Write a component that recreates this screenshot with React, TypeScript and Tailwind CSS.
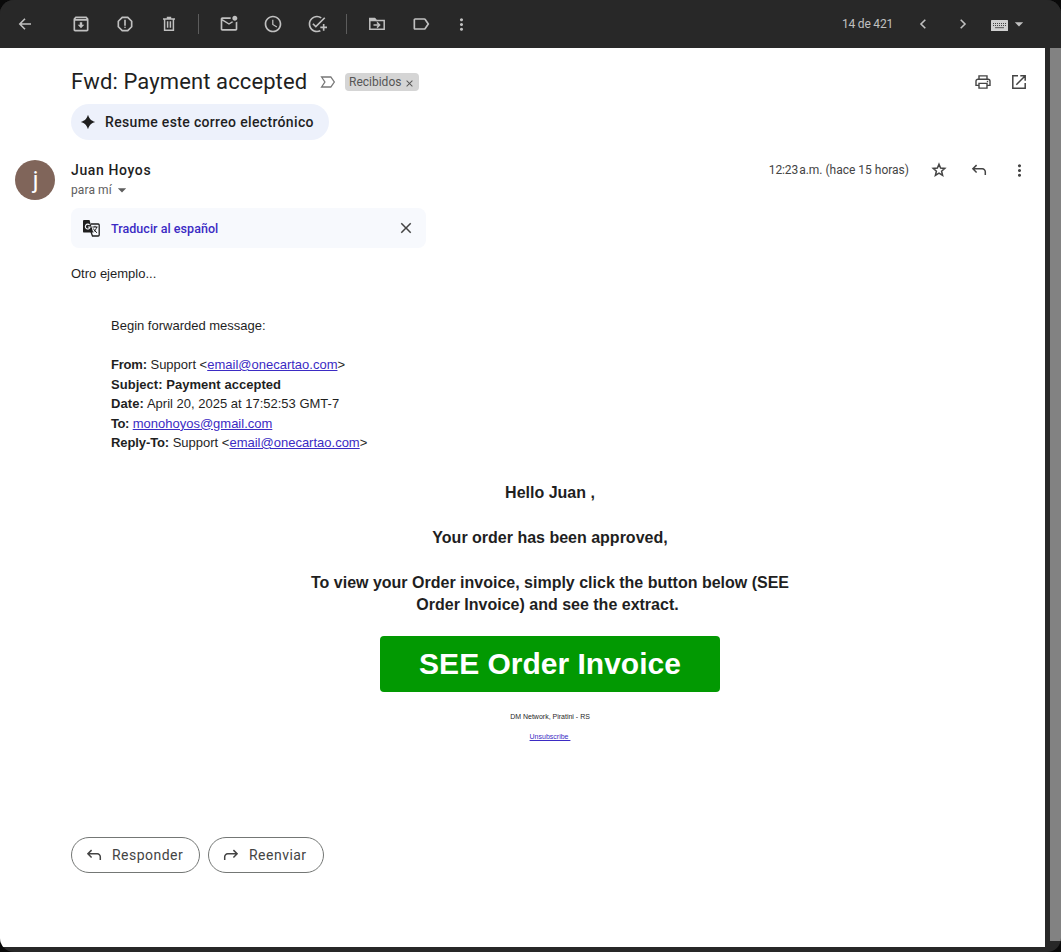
import type { ReactNode } from "react";
import {
  MdOutlineArchive,
  MdOutlineReport,
  MdOutlineMarkEmailUnread,
  MdOutlineSchedule,
  MdOutlineAddTask,
  MdOutlineLabel,
  MdMoreVert,
  MdArrowDropDown,
  MdClose,
} from "react-icons/md";

function Cell({ children, className = "w-11" }: { children: ReactNode; className?: string }) {
  return <button className={`flex h-10 shrink-0 items-center justify-center ${className}`}>{children}</button>;
}

function Divider() {
  return (
    <div className="flex w-4 pl-[7px]">
      <div className="h-5 w-px bg-[#5c5c5c]" />
    </div>
  );
}

function BackIcon() {
  return (
    <svg width="14" height="14" viewBox="0 0 14 14" fill="none" stroke="currentColor" strokeWidth="1.6">
      <path d="M13 7H2M7 1.8 1.8 7 7 12.2" />
    </svg>
  );
}

function TrashIcon() {
  return (
    <svg width="14" height="16" viewBox="0 0 14 16" fill="none" stroke="currentColor" strokeWidth="1.5">
      <path d="M1 2.9h12M4.8 1.6h4.4M2.6 3v11.2h8.8V3M5.6 5.2v6.6M8.4 5.2v6.6" />
    </svg>
  );
}

function FolderMoveIcon() {
  return (
    <svg width="18" height="14" viewBox="0 0 18 14" fill="none" stroke="currentColor" strokeWidth="1.5">
      <path d="M1.8 12.2V1.8h4.8l1.6 1.7h8v8.7Z" />
      <path d="M1.8 1.6h4.8l1.6 2H1.8Z" fill="currentColor" />
      <path d="M5.5 8h6M9 5.4 11.6 8 9 10.6" />
    </svg>
  );
}

function Chevron({ className = "" }: { className?: string }) {
  return (
    <svg className={className} width="8" height="12" viewBox="0 0 8 12" fill="none" stroke="currentColor" strokeWidth="1.6">
      <path d="M6.3 1.8 2 6l4.3 4.2" />
    </svg>
  );
}

function KeyboardIcon() {
  return (
    <svg width="17" height="11" viewBox="0 0 17 11">
      <rect width="17" height="11" rx="0.6" fill="#d0d0d0" />
      <path d="M2 3.5h13M2 5.5h13" stroke="#444" strokeWidth="1" strokeDasharray="1 1" />
      <path d="M4 7.7h9" stroke="#555" strokeWidth="1" />
    </svg>
  );
}

function ImportantIcon() {
  return (
    <svg width="16" height="12" viewBox="0 0 16 12" fill="none" stroke="currentColor" strokeWidth="1.3">
      <path d="M1.6 1h9.2L14.3 6l-3.5 5H1.6l3.3-5Z" />
    </svg>
  );
}

function PrintIcon() {
  return (
    <svg width="16" height="14" viewBox="0 0 16 14" fill="none" stroke="currentColor" strokeWidth="1.4">
      <path d="M4 4.2V.9h8v3.3M3.6 10.4H1V6.2a2 2 0 0 1 2-2h10a2 2 0 0 1 2 2v4.2h-2.6M4 8.4h8v4.7H4Z" />
      <path d="M11.8 6.5h1.4" />
    </svg>
  );
}

function OpenIcon() {
  return (
    <svg width="14" height="14" viewBox="0 0 14 14" fill="none" stroke="currentColor" strokeWidth="1.5">
      <path d="M6 .8H.8v12.4h12.4V8M8.3.8h4.9v4.9M13 1 4.3 9.7" />
    </svg>
  );
}

function StarIcon() {
  return (
    <svg width="16" height="16" viewBox="0 0 16 16" fill="none" stroke="currentColor" strokeWidth="1.5">
      <path d="m8 2.2 1.6 3.9 4.2.3-3.2 2.8 1 4.1L8 11.1l-3.6 2.2 1-4.1-3.2-2.8 4.2-.3Z" />
    </svg>
  );
}

function TranslateIcon() {
  return (
    <svg width="17" height="17" viewBox="0 0 17 17" fill="none">
      <path d="M8 4h7.2c.6 0 1 .4 1 1v10c0 .6-.4 1-1 1H9.5L8 12" stroke="#1f1f1f" strokeWidth="1.3" />
      <path d="M1.2 0h5.3l3.7 12.6h-9A1.2 1.2 0 0 1 0 11.4V1.2C0 .5.5 0 1.2 0Z" fill="#1f1f1f" />
      <path d="M6.6 5A2.4 2.4 0 1 0 7.1 7H4.9" stroke="#f7f9fd" strokeWidth="1.1" />
      <path d="M9.4 7h5.2M12 5.8V7M13.7 7c-.5 2.2-1.8 3.8-3.2 5M10.3 8.5c.8 1.8 2.1 3.2 3.7 4.3" stroke="#1f1f1f" strokeWidth="1" />
    </svg>
  );
}

function ReplyIcon({ className = "" }: { className?: string }) {
  return (
    <svg className={className} width="16" height="14" viewBox="0 0 16 14" fill="none" stroke="currentColor" strokeWidth="1.5">
      <path d="M5.6 2.1 1.9 5.8l3.7 3.7M2 5.8h9.3a3 3 0 0 1 3 3V12" />
    </svg>
  );
}

function SparkIcon() {
  return (
    <svg width="16" height="16" viewBox="0 0 16 16" fill="currentColor">
      <path d="M8 .8C9.4 5 11 6.6 15.2 8 11 9.4 9.4 11 8 15.2 6.6 11 5 9.4.8 8 5 6.6 6.6 5 8 .8Z" />
    </svg>
  );
}

function Toolbar() {
  return (
    <header className="flex h-12 shrink-0 items-center bg-[#282828] pl-[3px] text-[#c0c0c0]">
      <Cell><BackIcon /></Cell>
      <div className="w-3" />
      <Cell><MdOutlineArchive size={20} /></Cell>
      <Cell><MdOutlineReport size={20} /></Cell>
      <Cell><TrashIcon /></Cell>
      <Divider />
      <Cell><MdOutlineMarkEmailUnread size={20} /></Cell>
      <Cell><MdOutlineSchedule size={20} /></Cell>
      <Cell><MdOutlineAddTask size={20} /></Cell>
      <Divider />
      <Cell><FolderMoveIcon /></Cell>
      <Cell><MdOutlineLabel size={20} /></Cell>
      <Cell className="w-9"><MdMoreVert size={19} /></Cell>
      <span className="ml-auto text-[12px] tracking-[-0.2px]">14 de 421</span>
      <Cell className="ml-[10px] w-10"><Chevron /></Cell>
      <Cell className="w-10"><Chevron className="-scale-x-100" /></Cell>
      <button className="mr-8 ml-2 flex items-center gap-[1px]">
        <span className="mt-[3px]"><KeyboardIcon /></span>
        <MdArrowDropDown size={20} />
      </button>
    </header>
  );
}

function MailLink({ children }: { children: string }) {
  return <a className="text-[#3b2bc4] underline">{children}</a>;
}

export default function App() {
  return (
    <div className="h-[952px] w-[1061px] overflow-hidden bg-[#0a0a0a] font-['Roboto',sans-serif]">
      <div className="flex h-full flex-col overflow-hidden rounded-[14px] bg-[#282828]">
        <Toolbar />
        <div className="flex h-[899px]">
          <main className="w-[1045px] bg-white text-[#1f1f1f]">
            <div className="flex h-14 items-end pr-2 pl-[71px]">
              <h1 className="mb-[8px] w-[236px] text-[22px] leading-7 tracking-[0.11px] whitespace-nowrap">Fwd: Payment accepted</h1>
              <span className="mb-4 ml-[13px] text-[#777]"><ImportantIcon /></span>
              <span className="mb-[13px] ml-[9px] flex h-[18px] w-[74px] items-center rounded-[4px] bg-[#d5d5d5] px-1 text-[12px] text-[#555]">
                Recibidos<MdClose size={11} className="mt-[2px] ml-[3px] shrink-0" />
              </span>
              <div className="mb-[2px] ml-auto flex text-[#444]">
                <Cell className="w-9"><PrintIcon /></Cell>
                <Cell className="w-9"><OpenIcon /></Cell>
              </div>
            </div>
            <button className="ml-[71px] flex h-9 w-[258px] items-center gap-[9px] rounded-full bg-[#edf1fb] pl-[9px] text-[14px] font-medium tracking-[0.34px]">
              <SparkIcon />
              <span>Resume este correo electrónico</span>
            </button>
            <section className="mt-5 flex h-12 pl-[15px]">
              <div className="flex size-10 items-center justify-center rounded-full bg-[#80655a] pl-[1px] text-[24px] text-white">j</div>
              <div className="ml-4">
                <p className="text-[14px] leading-5 font-medium tracking-[0.62px]">Juan Hoyos</p>
                <p className="flex items-center text-[12px] leading-5 tracking-[0.1px] text-[#5e5e5e]">
                  para mí<MdArrowDropDown size={20} />
                </p>
              </div>
              <div className="ml-auto flex h-5 items-center pr-[6px] text-[#444]">
                <span className="mr-[10px] text-[12px]"><span className="tracking-[-0.1px]">12:23</span><span className="ml-px">a.m. (hace 15 horas)</span></span>
                <Cell className="w-10"><StarIcon /></Cell>
                <Cell className="w-10"><ReplyIcon /></Cell>
                <Cell className="w-10"><MdMoreVert size={19} /></Cell>
              </div>
            </section>
            <div className="ml-[71px] flex h-10 w-[355px] items-center rounded-lg bg-[#f7f9fd] pr-[11px] pl-3">
              <TranslateIcon />
              <span className="mt-[2px] ml-[11px] text-[12.5px] font-medium tracking-[0.04px] text-[#3b2bc4]">Traducir al español</span>
              <MdClose size={18} className="ml-auto text-[#444]" />
            </div>
            <article className="pl-[71px] font-['Liberation_Sans',Arial,sans-serif] text-[13px] leading-[19.5px]">
              <p className="mt-4">Otro ejemplo...</p>
              <div className="mt-[32.5px] pl-10">
                <p>Begin forwarded message:</p>
                <p className="mt-[19.5px]"><b className="tracking-[-0.2px]">From:</b> Support &lt;<MailLink>email@onecartao.com</MailLink>&gt;</p>
                <p><b className="tracking-[0.04px]">Subject: Payment accepted</b></p>
                <p><b className="tracking-[0.1px]">Date:</b> April 20, 2025 at 17:52:53 GMT-7</p>
                <p><b className="tracking-[-0.4px]">To:</b> <MailLink>monohoyos@gmail.com</MailLink></p>
                <p><b className="tracking-[-0.1px]">Reply-To:</b> Support &lt;<MailLink>email@onecartao.com</MailLink>&gt;</p>
              </div>
              <div className="ml-[229px] flex w-[500px] flex-col items-center pt-[29px] text-center">
                <div className="text-[16px] leading-[22.5px] font-bold">
                  <p>Hello Juan ,</p>
                  <p className="mt-[22.5px]">Your order has been approved,</p>
                  <p className="mt-[22.5px]">
                    To view your Order invoice, simply click the button below (SEE<br />
                    <span className="mr-[5px]">Order Invoice) and see the extract.</span>
                  </p>
                </div>
                <a className="mt-[19px] flex h-14 w-[340px] items-center justify-center rounded-[4px] bg-[#029902] text-[30px] font-bold text-white">SEE Order Invoice</a>
                <p className="mt-[15px] text-[7px] leading-5">DM Network, Piratini - RS</p>
                <p className="text-[7px] leading-5 whitespace-pre text-[#3b2bc4] underline">{"Unsubscribe "}</p>
              </div>
            </article>
            <div className="mt-[90px] flex gap-2 pl-[71px] text-[14px] tracking-[0.48px] text-[#444]">
              <button className="flex h-9 w-[129px] items-center gap-[10px] rounded-full border border-[#747775] pl-[14px]">
                <ReplyIcon /><span className="mt-px">Responder</span>
              </button>
              <button className="flex h-9 w-[116px] items-center gap-[10px] rounded-full border border-[#747775] pl-[14px]">
                <ReplyIcon className="-scale-x-100" /><span className="mt-px">Reenviar</span>
              </button>
            </div>
          </main>
          <div className="ml-[5px] h-[893px] w-[11px] bg-[#828282]" />
        </div>
      </div>
    </div>
  );
}
